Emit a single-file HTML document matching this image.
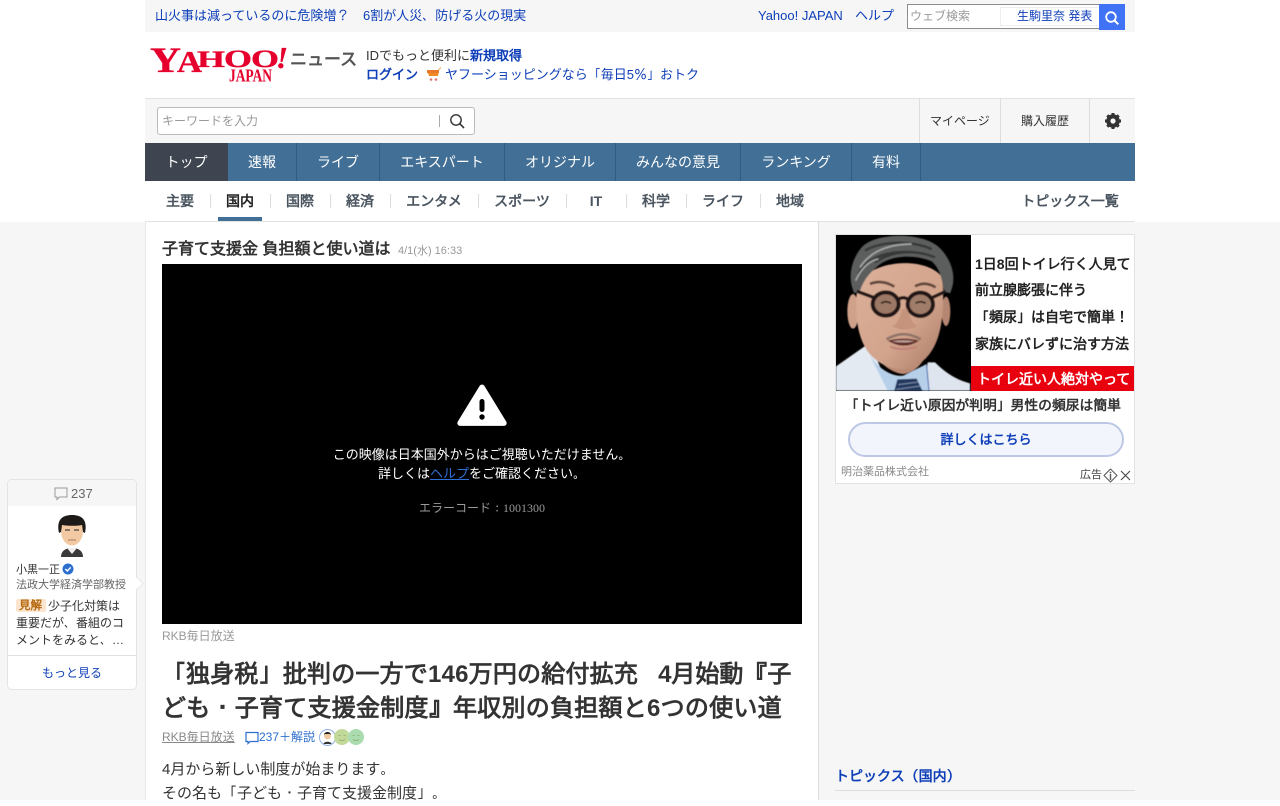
<!DOCTYPE html>
<html lang="ja"><head><meta charset="utf-8"><title>Yahoo!ニュース</title>
<style>
*{box-sizing:border-box}
html,body{margin:0;padding:0;width:1280px;height:800px;overflow:hidden;background:#fff;font-family:"Liberation Sans","WenQuanYi Zen Hei",sans-serif;color:#333}
.a{position:absolute;white-space:nowrap}
.l{color:#0e3fb8}
.p{font-family:"IPAGothic",sans-serif;line-height:0}
.sep{position:absolute;width:1px;background:#ddd}
.nav{position:absolute;top:143px;height:38px;line-height:38px;text-align:center;color:#fff;font-size:14px;border-right:1px solid #2f5d84}
.sub{position:absolute;top:181px;height:40px;line-height:40px;text-align:center;font-size:14px;font-weight:bold;color:#4a5560}
</style></head><body>
<div class="a" style="left:0;top:222px;width:1280px;height:578px;background:#f6f6f6"></div>
<div class="a" style="left:145px;top:222px;width:674px;height:578px;background:#fff;border-right:1px solid #ddd;border-left:1px solid #e8e8e8"></div>
<div class="a" style="left:145px;top:221px;width:990px;height:1px;background:#e2e2e2"></div>
<!-- top bar -->
<div class="a" style="left:145px;top:0;width:990px;height:32px;background:#f6f6f6"></div>
<div class="a l" style="left:155px;top:7px;font-size:13px;line-height:18px">山火事は減っているのに危険増<span class="p">？</span></div>
<div class="a l" style="left:363px;top:7px;font-size:13px;line-height:18px">6割が人災<span class="p">、</span>防げる火の現実</div>
<div class="a l" style="left:758px;top:7px;font-size:13px;line-height:18px">Yahoo! JAPAN</div>
<div class="a l" style="left:855px;top:7px;font-size:13px;line-height:18px">ヘルプ</div>
<div class="a" style="left:907px;top:4px;width:193px;height:25px;background:#fff;border:1px solid #8c8c8c"></div>
<div class="a" style="left:910px;top:8px;font-size:12px;line-height:16px;color:#999">ウェブ検索</div>
<div class="a" style="left:1000px;top:7px;width:98px;height:19px;border:1px solid #eee;border-right:0"></div>
<div class="a l" style="left:1017px;top:8px;font-size:12px;line-height:16px">生駒里奈 発表</div>
<div class="a" style="left:1099px;top:4px;width:26px;height:26px;background:#3f72f5"></div>
<svg class="a" style="left:1104px;top:10px" width="16" height="16" viewBox="0 0 16 16"><circle cx="7" cy="7" r="4.8" fill="none" stroke="#fff" stroke-width="1.8"/><path d="M10.5 10.5L14.3 14.3" stroke="#fff" stroke-width="2"/></svg>
<!-- logo -->
<svg class="a" style="left:145px;top:40px" width="150" height="46" viewBox="145 40 150 46" font-family="'Liberation Serif',serif" font-weight="bold" fill="#e6002d" stroke="#e6002d" stroke-width=".35">
<text x="150" y="72" font-size="36" textLength="31" lengthAdjust="spacingAndGlyphs">Y</text>
<text x="177" y="72" font-size="31" textLength="25" lengthAdjust="spacingAndGlyphs">A</text>
<text x="197" y="67" font-size="23" textLength="28" lengthAdjust="spacingAndGlyphs">H</text>
<text x="224" y="67" font-size="25" textLength="28" lengthAdjust="spacingAndGlyphs">O</text>
<text x="251" y="67" font-size="25" textLength="28" lengthAdjust="spacingAndGlyphs">O</text>
<text x="276" y="68" font-size="31" font-style="italic" textLength="12" lengthAdjust="spacingAndGlyphs">!</text>
<text x="229" y="81.5" font-size="18" textLength="43" lengthAdjust="spacingAndGlyphs" stroke-width=".1">JAPAN</text>
</svg>
<div class="a" style="left:290px;top:48px;font-size:17px;line-height:24px;font-weight:bold;color:#555">ニュース</div>
<div class="a" style="left:366px;top:47px;font-size:13px;line-height:18px">IDでもっと便利に<b class="l">新規取得</b></div>
<div class="a l" style="left:366px;top:66px;font-size:13px;line-height:18px"><b>ログイン</b></div>
<svg class="a" style="left:426px;top:67px" width="16" height="15" viewBox="0 0 16 15"><path d="M1 3h11l3-3v1l-2 2-1 6H3z" fill="#f08a24"/><rect x="1" y="3" width="12" height="3" fill="#e8792a"/><circle cx="5" cy="12.5" r="1.3" fill="#d77"/><circle cx="10" cy="12.5" r="1.3" fill="#d77"/></svg>
<div class="a l" style="left:445px;top:66px;font-size:13px;line-height:18px">ヤフーショッピングなら<span class="p">「</span>毎日5<span class="p">％」</span>おトク</div>
<!-- search row -->
<div class="a" style="left:145px;top:98px;width:990px;height:45px;background:#f6f6f6;border-top:1px solid #e2e2e2"></div>
<div class="a" style="left:157px;top:107px;width:318px;height:28px;background:#fff;border:1px solid #bbb;border-radius:3px"></div>
<div class="a" style="left:162px;top:113px;font-size:12px;line-height:16px;color:#999">キーワードを入力</div>
<div class="a" style="left:439px;top:115px;width:1px;height:12px;background:#aaa"></div>
<svg class="a" style="left:449px;top:113px" width="16" height="16" viewBox="0 0 16 16"><circle cx="7" cy="7" r="5.2" fill="none" stroke="#333" stroke-width="1.4"/><path d="M10.8 10.8L15 15" stroke="#333" stroke-width="1.6"/></svg>
<div class="sep" style="left:919px;top:99px;height:44px"></div>
<div class="sep" style="left:1000px;top:99px;height:44px"></div>
<div class="sep" style="left:1089px;top:99px;height:44px"></div>
<div class="a" style="left:930px;top:113px;font-size:12px;line-height:16px">マイページ</div>
<div class="a" style="left:1021px;top:113px;font-size:12px;line-height:16px">購入履歴</div>
<svg class="a" style="left:1104px;top:112px" width="18" height="18" viewBox="0 0 18 18"><circle cx="9" cy="9" r="5" fill="none" stroke="#333" stroke-width="3.6"/><path d="M9 1v16M1 9h16M3.3 3.3l11.4 11.4M14.7 3.3L3.3 14.7" stroke="#333" stroke-width="3"/><circle cx="9" cy="9" r="2.6" fill="#f6f6f6"/></svg>
<!-- nav -->
<div class="a" style="left:145px;top:143px;width:990px;height:38px;background:#426f96"></div>
<div class="nav" style="left:145px;width:83px;background:#3e4550;border:0">トップ</div>
<div class="nav" style="left:228px;width:69px">速報</div>
<div class="nav" style="left:297px;width:83px">ライブ</div>
<div class="nav" style="left:380px;width:125px">エキスパート</div>
<div class="nav" style="left:505px;width:111px">オリジナル</div>
<div class="nav" style="left:616px;width:125px">みんなの意見</div>
<div class="nav" style="left:741px;width:111px">ランキング</div>
<div class="nav" style="left:852px;width:69px">有料</div>
<!-- sub -->
<div class="sub" style="left:150px;width:60px">主要</div>
<div class="sub" style="left:210px;width:60px;color:#222">国内</div>
<div class="sub" style="left:270px;width:60px">国際</div>
<div class="sub" style="left:330px;width:60px">経済</div>
<div class="sub" style="left:390px;width:88px">エンタメ</div>
<div class="sub" style="left:478px;width:88px">スポーツ</div>
<div class="sub" style="left:566px;width:60px">IT</div>
<div class="sub" style="left:626px;width:60px">科学</div>
<div class="sub" style="left:686px;width:74px">ライフ</div>
<div class="sub" style="left:760px;width:60px">地域</div>
<div class="sub" style="left:1021px;width:98px;white-space:nowrap">トピックス一覧</div>
<div class="sep" style="left:210px;top:194px;height:14px"></div>
<div class="sep" style="left:270px;top:194px;height:14px"></div>
<div class="sep" style="left:330px;top:194px;height:14px"></div>
<div class="sep" style="left:390px;top:194px;height:14px"></div>
<div class="sep" style="left:478px;top:194px;height:14px"></div>
<div class="sep" style="left:566px;top:194px;height:14px"></div>
<div class="sep" style="left:626px;top:194px;height:14px"></div>
<div class="sep" style="left:686px;top:194px;height:14px"></div>
<div class="sep" style="left:760px;top:194px;height:14px"></div>
<div class="a" style="left:218px;top:217px;width:44px;height:4px;background:#426f96"></div>
<!-- article -->
<div class="a" style="left:162px;top:239px;font-size:16px;line-height:22px;font-weight:bold">子育て支援金 負担額と使い道は</div>
<div class="a" style="left:398px;top:244px;font-size:11px;line-height:14px;color:#999">4/1(水) 16:33</div>
<div class="a" style="left:162px;top:264px;width:640px;height:360px;background:#000"></div>
<svg class="a" style="left:456px;top:383px" width="52" height="44" viewBox="0 0 52 44"><path d="M26 1.5a3 3 0 0 1 2.4 1.4l22 36a2.8 2.8 0 0 1-2.4 4H4a2.8 2.8 0 0 1-2.4-4l22-36A3 3 0 0 1 26 1.5z" fill="#fff"/><rect x="23.5" y="16" width="5" height="13" rx="2.5" fill="#000"/><circle cx="26" cy="34" r="2.7" fill="#000"/></svg>
<div class="a" style="left:162px;top:445px;width:640px;text-align:center;font-size:13px;line-height:19px;color:#fff">この映像は日本国外からはご視聴いただけません<span class="p">。</span><br>詳しくは<span style="color:#2f6fd8;text-decoration:underline">ヘルプ</span>をご確認ください<span class="p">。</span></div>
<div class="a" style="left:162px;top:500px;width:640px;text-align:center;font:12px/16px 'Liberation Serif','WenQuanYi Zen Hei',serif;color:#999">エラーコード<span class="p">：</span>1001300</div>
<div class="a" style="left:162px;top:628px;font-size:12px;line-height:16px;color:#999">RKB毎日放送</div>
<div class="a" style="left:162px;top:658px;font-size:24px;line-height:34px;font-weight:bold;width:640px"><span class="p">「</span><span style="letter-spacing:.2px">独身税<span class="p">」</span>批判の一方で146万円の給付拡充</span><span style="letter-spacing:-4px">　</span><span style="letter-spacing:0">4月始動<span class="p">『</span>子</span><br><span style="letter-spacing:.25px">ども<span class="p">・</span>子育て支援金制度<span class="p">』</span>年収別の負担額と6つの使い道</span></div>
<div class="a" style="left:162px;top:729px;font-size:12px;line-height:16px;color:#888;text-decoration:underline">RKB毎日放送</div>
<svg class="a" style="left:245px;top:731px" width="14" height="14" viewBox="0 0 14 14"><path d="M1 1.5h12v9H5l-2 2v-2H1z" fill="none" stroke="#2d6fce" stroke-width="1.2"/></svg>
<div class="a" style="left:259px;top:729px;font-size:12px;line-height:16px;color:#2d6fce">237＋解説</div>
<div class="a" style="left:319px;top:729px;width:17px;height:17px;border-radius:50%;background:#fff;border:1.5px solid #8fb0e6"></div>
<svg class="a" style="left:321px;top:730px" width="13" height="15" viewBox="0 0 13 15"><circle cx="6.5" cy="6" r="3.4" fill="#f0c8a0"/><path d="M3 5c0-4 7-4 7 0l-1-1H4z" fill="#222"/><path d="M2.5 14c0-3 8-3 8 0z" fill="#333"/></svg>
<svg class="a" style="left:334px;top:729px" width="31" height="16" viewBox="0 0 31 16"><circle cx="8" cy="8" r="8" fill="#c2d99a"/><circle cx="22" cy="8" r="8" fill="#abdcb0"/><path d="M4.500 6.500h2M9.500 6.500h2M5 10.500q3 2 6 0M18.500 6.500h2M23.500 6.500h2M19 10.500q3 2 6 0" fill="none" stroke="#8aa86a" stroke-width=".8"/></svg>
<div class="a" style="left:162px;top:758px;font-size:15px;line-height:24px">4月から新しい制度が始まります<span class="p">。</span></div>
<div class="a" style="left:162px;top:782px;font-size:15px;line-height:24px">その名も<span class="p">「</span>子ども<span class="p">・</span>子育て支援金制度<span class="p">」。</span></div>
<!-- comment card -->
<div class="a" style="left:7px;top:479px;width:130px;height:211px;background:#fff;border:1px solid #e4e4e4;border-radius:5px;overflow:hidden">
<div style="height:26px;background:#f6f6f6"></div></div>
<svg class="a" style="left:54px;top:487px" width="14" height="14" viewBox="0 0 14 14"><path d="M1 1h12v9H5.5L3 12.5V10H1z" fill="none" stroke="#999" stroke-width="1"/></svg>
<div class="a" style="left:71px;top:486px;font-size:13px;line-height:16px;color:#666">237</div>
<svg class="a" style="left:52px;top:513px" width="40" height="46" viewBox="0 0 40 46"><path d="M9 44c0-7 6-9 11-9s11 2 11 9z" fill="#3a3a3a"/><path d="M15 35l5 6 5-6z" fill="#eee"/><ellipse cx="20" cy="18" rx="11" ry="14.500" fill="#f3c9a4"/><path d="M7 20C4 6 11 2 20 2s16 4 13 18l-2-1-1-7c-5 1-13 1-20 0l-1 7z" fill="#1e1a17"/><path d="M13 17h5M22 17h5" stroke="#222"/><path d="M16 27h8" stroke="#a76"/></svg>
<div class="a" style="left:16px;top:562px;font-size:11px;line-height:16px">小黒一正</div>
<svg class="a" style="left:62px;top:563px" width="12" height="12" viewBox="0 0 12 12"><circle cx="6" cy="6" r="5.500" fill="#2d6fce"/><path d="M3.300 6l2 2 3.400-3.600" fill="none" stroke="#fff" stroke-width="1.400"/></svg>
<div class="a" style="left:16px;top:577px;font-size:11px;line-height:16px;color:#666">法政大学経済学部教授</div>
<div class="a" style="left:16px;top:599px;width:30px;height:13px;background:#fce5cf;border-radius:2px"></div>
<div class="a" style="left:19px;top:598px;font-size:11.500px;line-height:16px;font-weight:bold;color:#b4690e">見解</div>
<div class="a" style="left:48px;top:597px;font-size:12px;line-height:18px">少子化対策は</div>
<div class="a" style="left:16px;top:614px;font-size:12px;line-height:18px">重要だが<span class="p">、</span>番組のコ</div>
<div class="a" style="left:16px;top:631px;font-size:12px;line-height:18px">メントをみると<span class="p">、</span>…</div>
<div class="a" style="left:8px;top:655px;width:128px;height:1px;background:#e0e0e0"></div>
<div class="a l" style="left:8px;top:665px;width:128px;text-align:center;font-size:12px;line-height:16px">もっと見る</div>
<div class="a" style="left:133px;top:579px;width:9px;height:9px;background:#fff;transform:rotate(45deg);border-top:1px solid #e8e8e8;border-right:1px solid #e8e8e8"></div>
<!-- ad -->
<div class="a" style="left:835px;top:234px;width:300px;height:250px;background:#fff;border:1px solid #e2e2e2"></div>
<svg class="a" style="left:835px;top:234px" width="140" height="160" viewBox="0 0 420 480"><defs><linearGradient id="f" x1="0" y1="0" x2="1" y2="1"><stop offset="0" stop-color="#dcb09a"/><stop offset=".6" stop-color="#d3a48c"/><stop offset="1" stop-color="#a87a66"/></linearGradient><filter id="b"><feGaussianBlur stdDeviation="1.6"/></filter></defs>
<rect x="3" y="3" width="405" height="468" fill="#000"/>
<g filter="url(#b)">
<ellipse cx="54" cy="232" rx="17" ry="52" fill="#cfa08a"/><ellipse cx="333" cy="232" rx="13" ry="44" fill="#b58772"/>
<path d="M3 397L92 335L115 350L165 470H3z" fill="#e3eaf2"/><path d="M278 385L300 385C340 425 375 440 405 448V470H268z" fill="#dfe5ee"/>
<path d="M95 345C120 400 170 430 205 425L275 390L282 470H158z" fill="#b7d0ea"/>
<path d="M187 436L245 434L262 470H178z" fill="#24395f"/><path d="M190 452L250 444M184 466L256 456" stroke="#7d8ea8" stroke-width="3"/>
<path d="M275 395L282 470" stroke="#2d5ea8" stroke-width="3"/>
<path d="M110 330C120 390 180 420 205 420C240 415 275 385 280 330z" fill="#bb8a73"/>
<path d="M68 150C55 250 70 335 120 375C160 410 230 420 265 380C312 340 332 260 322 130C280 70 120 70 68 150z" fill="url(#f)"/>
<path d="M58 178C35 130 50 70 85 35C130-5 260-5 310 38C350 75 368 130 345 178L326 172C322 130 312 102 290 82C240 62 170 62 130 95C100 120 86 140 76 168z" fill="#5b5d5d"/>
<path d="M90 50C130 25 220 15 290 45M70 120C95 70 170 40 270 60M120 85C170 50 240 45 300 70" fill="none" stroke="#363737" stroke-width="7"/>
<path d="M75 100C100 60 150 30 230 30M62 140C75 110 100 80 130 75" fill="none" stroke="#a5a6a6" stroke-width="5"/>
<path d="M105 150Q140 135 178 158M240 157Q270 140 302 160" fill="none" stroke="#61473b" stroke-width="8"/>
<ellipse cx="152" cy="210" rx="39" ry="35" fill="#9c7866" stroke="#241814" stroke-width="12"/>
<ellipse cx="256" cy="211" rx="38" ry="35" fill="#a07d6a" stroke="#241814" stroke-width="12"/>
<path d="M138 208Q152 198 168 208M242 208Q256 198 272 208" fill="none" stroke="#2a1d18" stroke-width="5"/>
<path d="M190 196Q205 186 219 196M66 172L115 190M293 190L332 172" fill="none" stroke="#241814" stroke-width="10"/>
<path d="M200 225Q195 265 172 277Q208 296 246 277Q224 260 218 225z" fill="#c08d76" opacity=".75"/>
<path d="M155 316Q205 285 257 316" fill="none" stroke="#8e7367" stroke-width="8"/>
<path d="M158 320Q205 308 252 320Q208 350 158 320z" fill="#5f2a28"/><path d="M170 322Q205 315 240 322Q205 330 170 322z" fill="#b59b92"/>
<path d="M165 338Q205 352 245 338" fill="none" stroke="#c08478" stroke-width="7"/>
</g></svg>
<div class="a" style="left:975px;top:253px;font-size:14px;line-height:22px;font-weight:bold;color:#222">1日8回トイレ行く人見て</div>
<div class="a" style="left:975px;top:279px;font-size:14px;line-height:22px;font-weight:bold;color:#222">前立腺膨張に伴う</div>
<div class="a" style="left:975px;top:306px;font-size:14px;line-height:22px;font-weight:bold;color:#222"><span class="p">「</span>頻尿<span class="p">」</span>は自宅で簡単！</div>
<div class="a" style="left:975px;top:333px;font-size:14px;line-height:22px;font-weight:bold;color:#222">家族にバレずに治す方法</div>
<div class="a" style="left:971px;top:366px;width:163px;height:25px;background:#e8000e"></div>
<div class="a" style="left:977px;top:368px;font-size:14px;line-height:23px;font-weight:bold;color:#fff">トイレ近い人絶対やって</div>
<div class="a" style="left:845px;top:396px;font-size:13.800px;line-height:20px;font-weight:bold;color:#333"><span class="p">「</span>トイレ近い原因が判明<span class="p">」</span>男性の頻尿は簡単</div>
<div class="a" style="left:848px;top:422px;width:276px;height:35px;border:2px solid #bcc8e4;border-radius:18px;background:#f2f5fc;text-align:center;font-size:13px;line-height:31px;font-weight:bold;color:#0e3fb8">詳しくはこちら</div>
<div class="a" style="left:841px;top:464px;font-size:11px;line-height:16px;color:#888">明治薬品株式会社</div>
<div class="a" style="left:1080px;top:468px;font-size:11px;line-height:15px;color:#444">広告</div>
<svg class="a" style="left:1103px;top:468px" width="15" height="15" viewBox="0 0 15 15"><path d="M7.500 1L14 7.500 7.500 14 1 7.500z" fill="none" stroke="#555" stroke-linejoin="round"/><path d="M7.500 6v6" stroke="#555" stroke-width="1.400"/><circle cx="7.500" cy="4.500" r=".9" fill="#555"/></svg>
<svg class="a" style="left:1120px;top:470px" width="11" height="11" viewBox="0 0 11 11"><path d="M1 1l9 9M10 1l-9 9" stroke="#444" stroke-width="1.100"/></svg>
<!-- side -->
<div class="a l" style="left:835px;top:766px;font-size:14px;line-height:20px;font-weight:bold">トピックス<span class="p">（</span>国内<span class="p">）</span></div>
<div class="a" style="left:835px;top:790px;width:300px;height:1px;background:#ddd"></div>
</body></html>
